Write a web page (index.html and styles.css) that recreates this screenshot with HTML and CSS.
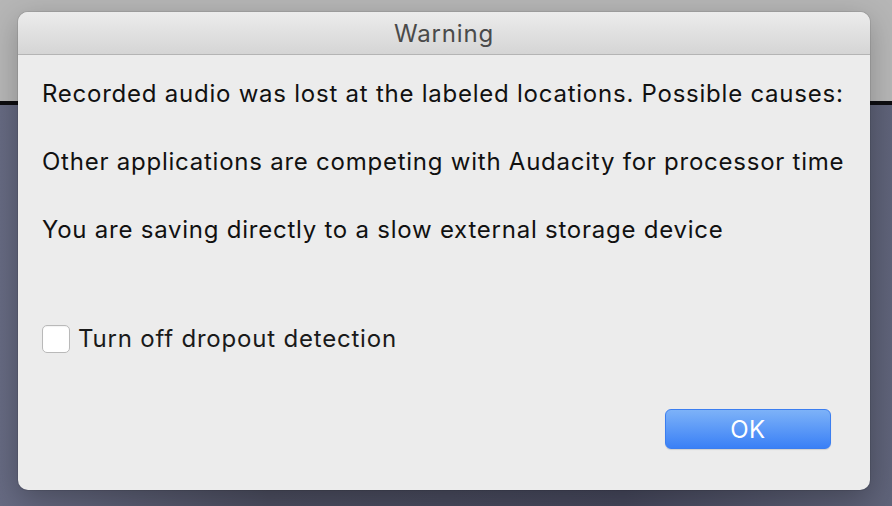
FILE: index.html
```html
<!DOCTYPE html>
<html lang="en">
  <head>
    <meta charset="utf-8" />
    <title>Warning</title>
    <link rel="stylesheet" href="styles.css">
  </head>

  <body>
    <div id="desktop">
      <div id="backWindow"></div>
      <div id="backEdge"></div>
      <div id="workspace"></div>
    </div>

    <div id="dialog">
      <div id="titleBar">Warning</div>
      <div id="content">
        <p class="msg">Recorded audio was lost at the labeled locations. Possible causes:</p>
        <p class="msg">Other applications are competing with Audacity for processor time</p>
        <p class="msg">You are saving directly to a slow external storage device</p>
        <label id="dropout">
          <span class="checkbox"></span>
          <span>Turn off dropout detection</span>
        </label>
        <div id="buttons">
          <button id="okButton">OK</button>
        </div>
      </div>
    </div>
  </body>
</html>
```

FILE: styles.css
```css
html,
body {
  margin: 0px;
  width: 892px;
  height: 506px;
  overflow: hidden;
  font-family: Inter, "Liberation Sans", Arial, sans-serif;
}

#desktop {
  display: flex;
  flex-direction: column;
  height: 100%;
}

#backWindow {
  height: 101px;
  background-color: #b6b6b6;
}

#backEdge {
  height: 4px;
  background-color: #0d0d10;
}

#workspace {
  flex: 1;
  background: linear-gradient(90deg, #666a82 0%, #4a4c5e 30%, #44465a 70%, #5f6379 100%);
}

#dialog {
  position: absolute;
  left: 18px;
  top: 12px;
  width: 852px;
  height: 478px;
  border-radius: 10px;
  background-color: #ececec;
  box-shadow: 0px 0px 0px 1px rgba(0, 0, 0, 0.08), 0px 8px 30px rgba(0, 0, 0, 0.25);
  overflow: hidden;
  display: flex;
  flex-direction: column;
}

#titleBar {
  height: 42px;
  line-height: 44px;
  text-align: center;
  font-size: 24px;
  letter-spacing: 0.85px;
  color: #4a4a4a;
  background: linear-gradient(#ececec, #d5d5d5);
  border-bottom: 1px solid #b4b4b4;
}

#content {
  flex: 1;
  display: flex;
  flex-direction: column;
  padding: 25px 24px 0px 24px;
}

.msg {
  margin: 0px 0px 40px 0px;
  font-size: 24px;
  line-height: 28px;
  letter-spacing: 0.76px;
  color: #111;
  white-space: nowrap;
}

#dropout {
  display: flex;
  align-items: center;
  gap: 8px;
  margin-top: 40px;
  font-size: 24px;
  letter-spacing: 0.8px;
  color: #1a1a1a;
}

.checkbox {
  width: 26px;
  height: 26px;
  border: 1px solid #b9b9b9;
  border-radius: 5px;
  background-color: #fff;
  box-shadow: inset 0px 1px 1px rgba(0, 0, 0, 0.05);
}

#buttons {
  display: flex;
  justify-content: flex-end;
  margin-top: 56px;
  padding-right: 15px;
}

#okButton {
  width: 166px;
  height: 40px;
  border: 1px solid #3b7ef0;
  border-radius: 6px;
  background: linear-gradient(#7db2f8, #3a80f6);
  color: #fff;
  font-family: Inter, "Liberation Sans", Arial, sans-serif;
  font-size: 24px;
  letter-spacing: 0.5px;
  box-shadow: 0px 1px 1px rgba(0, 0, 0, 0.12);
  padding: 0px;
}
```
